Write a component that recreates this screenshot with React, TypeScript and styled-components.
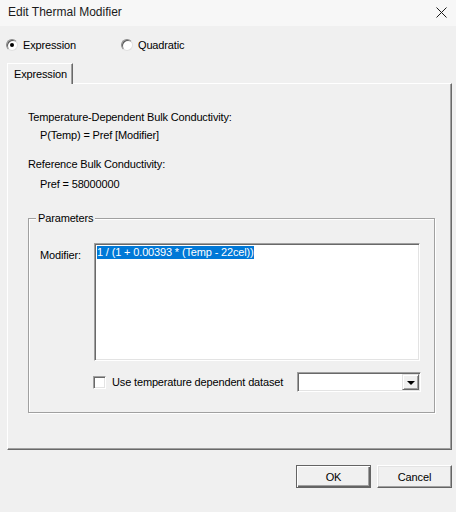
import React from "react";
import styled, { createGlobalStyle } from "styled-components";

const GlobalStyle = createGlobalStyle`
    html, body {
        margin: 0;
        padding: 0;
        background: #f0f0f0;
    }
    * {
        box-sizing: border-box;
    }
`

const Window = styled.div`
    width: 456px;
    height: 512px;
    background: #f0f0f0;
    font-family: "Liberation Sans", Arial, sans-serif;
    font-size: 11px;
    letter-spacing: -0.15px;
    color: #000;
    display: flex;
    flex-direction: column;
`
const TitleBar = styled.div`
    height: 26px;
    display: flex;
    align-items: center;
    justify-content: space-between;
    padding: 0 8px 2px 8px;
    background: #f7f7f7;
    font-size: 12px;
    letter-spacing: 0;
    color: #1a1a1a;
`
const CloseIcon = styled.svg`
    width: 11px;
    height: 11px;
    margin-right: 1px;
`
const Body = styled.div`
    padding: 0 4px 0 7px;
    display: flex;
    flex-direction: column;
`
const RadioRow = styled.div`
    display: flex;
    margin-top: 12px;
    height: 14px;
    align-items: center;
    margin-left: -1px;
`
const RadioItem = styled.label<{ $width?: number }>`
    display: flex;
    align-items: center;
    gap: 5px;
    width: ${p => (p.$width ? `${p.$width}px` : "auto")};
    line-height: 14px;
`
const RadioCircle = styled.span<{ $checked?: boolean }>`
    width: 12px;
    height: 12px;
    border-radius: 50%;
    border: 1px solid #8a8a8a;
    border-color: #8a8a8a #e0e0e0 #e0e0e0 #8a8a8a;
    background: #fff;
    box-shadow: inset 1px 1px 0 #5a5a5a;
    display: flex;
    align-items: center;
    justify-content: center;
    &::after {
        content: "";
        width: 4px;
        height: 4px;
        border-radius: 50%;
        background: ${p => (p.$checked ? "#000" : "transparent")};
    }
`
const TabStrip = styled.div`
    display: flex;
    margin-top: 11px;
    height: 20px;
`
const Tab = styled.div`
    position: relative;
    z-index: 1;
    width: 66px;
    height: 21px;
    padding: 3px 0 0 6px;
    background: #f0f0f0;
    border-top: 1px solid #fff;
    border-left: 1px solid #fff;
    border-right: 1px solid #696969;
    box-shadow: inset -1px 0 0 #a0a0a0;
    line-height: 14px;
`
const Panel = styled.div`
    height: 367px;
    border-top: 1px solid #fff;
    border-left: 1px solid #fff;
    border-right: 1px solid #696969;
    border-bottom: 1px solid #696969;
    box-shadow: inset -1px -1px 0 #a0a0a0;
    padding: 26px 0 0 20px;
    display: flex;
    flex-direction: column;
`
const InfoLine = styled.div<{ $indent?: boolean; $gap: number }>`
    line-height: 14px;
    margin-top: ${p => p.$gap}px;
    padding-left: ${p => (p.$indent ? 12 : 0)}px;
`
const GroupBox = styled.div`
    position: relative;
    margin-top: 27px;
    width: 407px;
    height: 195px;
    border: 1px solid #a0a0a0;
    box-shadow: inset 1px 1px 0 #fff, 1px 1px 0 #fff;
    padding: 24px 13px 0 11px;
`
const Legend = styled.span`
    position: absolute;
    top: -8px;
    left: 7px;
    padding: 0 2px;
    background: #f0f0f0;
    line-height: 14px;
`
const FieldRow = styled.div`
    display: flex;
`
const FieldLabel = styled.div`
    width: 54px;
    margin-top: 5px;
    line-height: 14px;
`
const TextArea = styled.div`
    width: 326px;
    height: 118px;
    background: #fff;
    border: 1px solid;
    border-color: #a0a0a0 #fff #fff #a0a0a0;
    box-shadow: inset 1px 1px 0 #696969, inset -1px -1px 0 #e3e3e3;
    padding: 2px 0 0 2px;
    line-height: 13px;
`
const Selected = styled.span`
    background: #0078d7;
    color: #fff;
    padding-bottom: 1px;
`
const OptionRow = styled.div`
    display: flex;
    align-items: center;
    margin: 11px 0 0 53px;
    width: 328px;
`
const CheckBox = styled.span`
    width: 13px;
    height: 13px;
    background: #fff;
    border: 1px solid;
    border-color: #a0a0a0 #fff #fff #a0a0a0;
    box-shadow: inset 1px 1px 0 #696969, inset -1px -1px 0 #e3e3e3;
`
const CheckLabel = styled.span`
    margin-left: 6px;
    line-height: 14px;
`
const Combo = styled.div`
    margin-left: auto;
    width: 124px;
    height: 20px;
    background: #fff;
    border: 1px solid;
    border-color: #a0a0a0 #fff #fff #a0a0a0;
    box-shadow: inset 1px 1px 0 #696969, inset -1px -1px 0 #e3e3e3;
    display: flex;
    justify-content: flex-end;
    padding: 1px 1px 1px 0;
`
const ComboButton = styled.div`
    width: 17px;
    height: 16px;
    background: #f0f0f0;
    border-top: 1px solid #e3e3e3;
    border-left: 1px solid #e3e3e3;
    border-right: 1px solid #696969;
    border-bottom: 1px solid #696969;
    box-shadow: inset 1px 1px 0 #fff, inset -1px -1px 0 #a0a0a0;
    display: flex;
    align-items: center;
    justify-content: center;
    &::after {
        content: "";
        border-left: 4px solid transparent;
        border-right: 4px solid transparent;
        border-top: 4px solid #000;
        margin-top: 1px;
    }
`
const Footer = styled.div`
    display: flex;
    justify-content: flex-end;
    gap: 6px;
    margin-top: 15px;
`
const Button = styled.button<{ $default?: boolean }>`
    width: 75px;
    height: 23px;
    font-family: "Liberation Sans", Arial, sans-serif;
    font-size: 11px;
    letter-spacing: -0.15px;
    color: #000;
    background: #f0f0f0;
    padding: 0;
    border: 1px solid ${p => (p.$default ? "#646464" : "#f0f0f0")};
    border-top-color: ${p => (p.$default ? "#646464" : "#fff")};
    border-left-color: ${p => (p.$default ? "#646464" : "#fff")};
    border-right-color: #646464;
    border-bottom-color: #646464;
    box-shadow: ${p =>
        p.$default
            ? "inset 1px 1px 0 #fff, inset -1px -1px 0 #646464, inset -2px -2px 0 #a0a0a0"
            : "inset -1px -1px 0 #a0a0a0, inset 1px 1px 0 #e3e3e3"};
`

const App = () => {
    return (
        <Window>
            <GlobalStyle />
            <TitleBar>
                <span>Edit Thermal Modifier</span>
                <CloseIcon viewBox="0 0 11 11">
                    <path d="M0.5 0.5 L10.5 10.5 M10.5 0.5 L0.5 10.5" stroke="#1a1a1a" strokeWidth="1" />
                </CloseIcon>
            </TitleBar>
            <Body>
                <RadioRow>
                    <RadioItem $width={115}>
                        <RadioCircle $checked />
                        Expression
                    </RadioItem>
                    <RadioItem>
                        <RadioCircle />
                        Quadratic
                    </RadioItem>
                </RadioRow>
                <TabStrip>
                    <Tab>Expression</Tab>
                </TabStrip>
                <Panel>
                    <InfoLine $gap={0}>Temperature-Dependent Bulk Conductivity:</InfoLine>
                    <InfoLine $gap={4} $indent>P(Temp) = Pref [Modifier]</InfoLine>
                    <InfoLine $gap={15}>Reference Bulk Conductivity:</InfoLine>
                    <InfoLine $gap={6} $indent>Pref = 58000000</InfoLine>
                    <GroupBox>
                        <Legend>Parameters</Legend>
                        <FieldRow>
                            <FieldLabel>Modifier:</FieldLabel>
                            <TextArea>
                                <Selected>1 / (1 + 0.00393 * (Temp - 22cel))</Selected>
                            </TextArea>
                        </FieldRow>
                        <OptionRow>
                            <CheckBox />
                            <CheckLabel>Use temperature dependent dataset</CheckLabel>
                            <Combo>
                                <ComboButton />
                            </Combo>
                        </OptionRow>
                    </GroupBox>
                </Panel>
                <Footer>
                    <Button $default>OK</Button>
                    <Button>Cancel</Button>
                </Footer>
            </Body>
        </Window>
    )
}

export default App;
